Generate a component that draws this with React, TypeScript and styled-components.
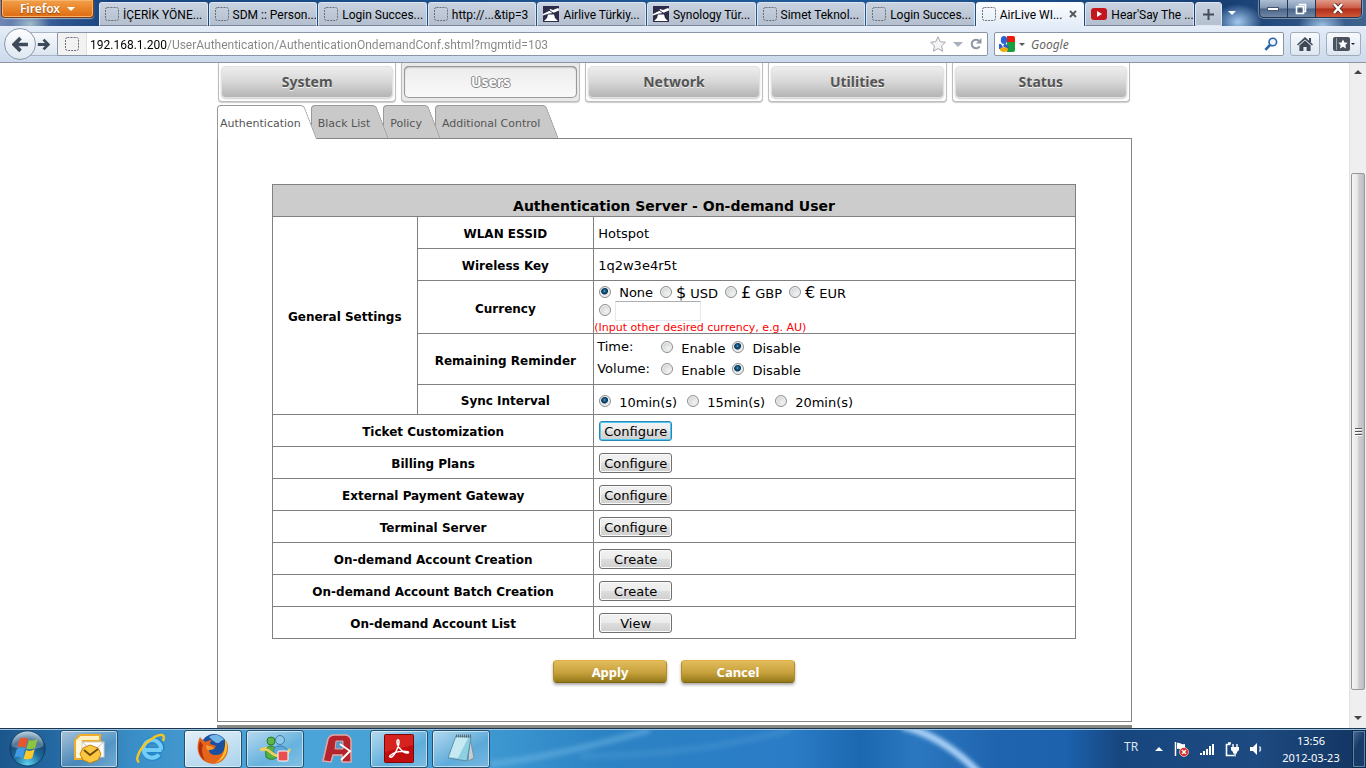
import React from 'react';
import styled, { createGlobalStyle, css } from 'styled-components';

const UI = `"Noto Sans", "Open Sans", sans-serif`;
const CHROME = `Roboto, "Open Sans", sans-serif`;
const PAGE = `"DejaVu Sans", Verdana, sans-serif`;

const GlobalStyle = createGlobalStyle`
  *, *::before, *::after { box-sizing: border-box; }
  body { margin: 0; font-family: ${UI}; font-size: 12px; color: #000; background: #fff; }
  button, input { font: inherit; color: inherit; margin: 0; }
  button { padding: 0; cursor: pointer; }
  svg { display: block; flex: none; }
`;

const Desktop = styled.div`
  display: flex;
  flex-direction: column;
  height: 100vh;
  overflow: hidden;
`;

/* ---------- window title bar and tabs ---------- */

const TitleBar = styled.header`
  display: flex;
  align-items: flex-start;
  height: 26px;
  padding-left: 1px;
  padding-right: 4px;
  background:
    radial-gradient(ellipse 20px 12px at 30px 24px, rgba(190, 214, 214, 0.75), transparent),
    radial-gradient(ellipse 24px 18px at calc(100% - 128px) 22px, rgba(170, 208, 244, 0.95), transparent),
    radial-gradient(ellipse 24px 16px at calc(100% - 44px) 26px, rgba(170, 204, 236, 0.9), transparent),
    linear-gradient(90deg, #6f87b4 0, #2f5590 60px, #17457f 110px, #1f5a98 60%, #173f74 90%, #40638f 100%);
`;

const AppButton = styled.button`
  display: flex;
  justify-content: center;
  align-items: center;
  gap: 7px;
  width: 93px;
  height: 18px;
  margin-right: 5px;
  border: 1px solid #7a3a17;
  border-top: 0;
  border-radius: 0 0 4px 4px;
  background: linear-gradient(#f2a04c, #e8852a 50%, #de6a12);
  box-shadow: inset 0 0 0 1px #f6b56b, 0 1px 1px rgba(255, 255, 255, 0.5);
  color: #fff;
  font-weight: 600;
  text-shadow: 0 1px 1px #8a4412;
`;

const Caret = styled.span<{ $color: string; $size?: number }>`
  border: ${(p) => p.$size ?? 4}px solid transparent;
  border-top-color: ${(p) => p.$color};
  border-bottom: 0;
`;

const Tabs = styled.nav`
  display: flex;
  flex: 1;
  min-width: 0;
  gap: 1px;
  padding-top: 2px;
  font-family: ${CHROME};
`;

const BrowserTab = styled.a<{ $active?: boolean }>`
  display: flex;
  flex: 1;
  min-width: 0;
  align-items: center;
  gap: 4px;
  height: 24px;
  padding: 0 2px 0 5px;
  border: 1px solid ${(p) => (p.$active ? '#f6faff' : '#dde5ef')};
  border-bottom-color: ${(p) => (p.$active ? '#e4edf8' : '#7a8698')};
  border-radius: 3px 3px 0 0;
  background: ${(p) => (p.$active ? 'linear-gradient(#fbfdff, #e4edf8)' : 'linear-gradient(#c8d2e0, #b4bfcf)')};
  color: #000;
  text-decoration: none;
  white-space: nowrap;
  overflow: hidden;
`;

const TabLabel = styled.span`
  flex: 1;
  min-width: 0;
  padding-top: 2px;
`;

const TabClose = styled.button`
  width: 12px;
  border: 0;
  background: none;
  color: #444;
`;

const NewTab = styled.button`
  display: grid;
  place-items: center;
  width: 27px;
  height: 24px;
  margin: 2px 0 0 1px;
  border: 1px solid #dde5ef;
  border-radius: 3px 3px 0 0;
  background: linear-gradient(#c8d2e0, #b4bfcf);
`;

const ListTabs = styled.button`
  display: grid;
  place-items: center;
  width: 20px;
  height: 26px;
  margin-right: 17px;
  border: 0;
  background: none;
`;

const WindowButtons = styled.div`
  display: flex;
  width: 103px;
  height: 18px;
  border: 1px solid #24364f;
  border-top: 0;
  border-radius: 0 0 5px 5px;
  box-shadow: 0 0 0 1px rgba(255, 255, 255, 0.35);
  overflow: hidden;
`;

const WindowButton = styled.button<{ $close?: boolean }>`
  display: grid;
  place-items: center;
  flex: ${(p) => (p.$close ? 47 : 28)};
  border: 0;
  border-right: ${(p) => (p.$close ? 0 : '1px solid #24364f')};
  background: ${(p) =>
    p.$close
      ? 'linear-gradient(#e09a8a, #cc5a45 48%, #b02c16 52%, #d0583a)'
      : 'linear-gradient(#aebfd4, #8298b5 48%, #4a6488 52%, #6f88a8)'};
`;

/* ---------- address bar ---------- */

const Toolbar = styled.div`
  display: flex;
  align-items: center;
  height: 37px;
  padding: 0 5px 0 4px;
  border-bottom: 1px solid #8e959e;
  background: linear-gradient(#e4edf8, #cbdaec);
  font-family: ${CHROME};
`;

const BackButton = styled.button`
  position: relative;
  z-index: 1;
  display: grid;
  place-items: center;
  width: 32px;
  height: 32px;
  border: 1px solid #8d99aa;
  border-radius: 50%;
  background: linear-gradient(#fdfeff, #dde6f0);
`;

const ForwardButton = styled.button`
  display: grid;
  place-items: center;
  width: 28px;
  height: 24px;
  margin-left: -7px;
  border: 1px solid #a9b4c2;
  border-width: 1px 0;
  background: linear-gradient(#f6f9fc, #dce5ef);
`;

const Field = styled.div<{ $grow?: boolean }>`
  display: flex;
  align-items: center;
  flex: ${(p) => (p.$grow ? '1' : '0 1 290px')};
  min-width: 0;
  height: 24px;
  margin-right: 6px;
  border: 1px solid #8a96a5;
  border-radius: ${(p) => (p.$grow ? '0 2px 2px 0' : '2px')};
  background: #fff;
`;

const SiteIdentity = styled.span`
  display: grid;
  place-items: center;
  width: 29px;
  height: 22px;
  margin-right: 3px;
  border-right: 1px solid #ddd;
  background: #f2f2f2;
`;

const AddressInput = styled.input`
  flex: 1;
  min-width: 0;
  padding: 2px 0 0;
  border: 0;
  outline: 0;
  background: linear-gradient(90deg, #000 77px, #858585 77px);
  background-clip: text;
  -webkit-background-clip: text;
  -webkit-text-fill-color: transparent;
`;

const FieldIcons = styled.span`
  display: flex;
  align-items: center;
  gap: 7px;
  padding-right: 5px;
`;

const SearchInput = styled.input`
  flex: 1;
  min-width: 0;
  padding: 0;
  border: 0;
  outline: 0;
  background: none;
  font-family: ${UI};
  &::placeholder { color: #666; font-style: italic; opacity: 1; }
`;

const ToolButton = styled.button<{ $wide?: boolean }>`
  display: flex;
  align-items: center;
  justify-content: center;
  gap: 1px;
  width: ${(p) => (p.$wide ? 35 : 30)}px;
  height: 24px;
  margin-left: ${(p) => (p.$wide ? 6 : 0)}px;
  border: 1px solid #a2adbb;
  border-radius: 3px;
  background: linear-gradient(#f8fafd, #dde6f0);
`;

/* ---------- page viewport ---------- */

const Viewport = styled.div`
  display: flex;
  flex: 1;
  min-height: 0;
  background: #fff;
`;

const Page = styled.main`
  flex: 1;
  min-width: 0;
  overflow: hidden;
  font-family: ${PAGE};
  font-size: 13px;
`;

const Content = styled.div`
  max-width: 915px;
  margin: 0 auto;
`;

const MainMenu = styled.nav`
  display: grid;
  grid-template-columns: repeat(5, 1fr);
  gap: 5px;
  padding: 0 2px 0 1px;
`;

const MenuItem = styled.a<{ $active?: boolean }>`
  height: 39px;
  padding: 3px 2px;
  border: 1px solid #bdbdbd;
  border-top: 0;
  border-radius: 0 0 4px 4px;
  background: ${(p) => (p.$active ? '#e9e9e9' : '#fff')};
  box-shadow: 0 1px 1px #ccc;
  font: 700 14px ${UI};
  text-decoration: none;
`;

const MenuFace = styled.span<{ $active?: boolean }>`
  display: grid;
  place-items: center;
  height: 32px;
  padding-bottom: 2px;
  border-radius: 5px;
  color: #555;
  text-shadow: 0 1px 0 #f4f4f4;
  background: linear-gradient(#efefef, #dadada 45%, #b2b2b2);
  box-shadow: inset 0 0 0 1px #e2e2e2, 0 1px 2px #ccc;
  ${(p) =>
    p.$active &&
    css`
      color: #fff;
      text-shadow: -1px 0 0 #888, 1px 0 0 #888, 0 -1px 0 #888, 0 1px 0 #888, 0 0 1px #888;
      background: linear-gradient(#ececec, #fafafa);
      box-shadow: inset 0 0 0 1px #999, inset 0 1px 2px #777;
    `}
`;

const SubTabs = styled.nav`
  display: flex;
  margin-top: 3px;
  font-size: 11px;
`;

const SubTab = styled.a<{ $order: number; $active?: boolean }>`
  position: relative;
  z-index: ${(p) => p.$order};
  display: flex;
  align-items: center;
  height: 34px;
  margin: 0 -6px -1px 0;
  padding: 3px ${(p) => (p.$active ? 16 : 19)}px 0 ${(p) => (p.$active ? 3 : 7)}px;
  color: #555;
  text-decoration: none;

  &::before,
  &::after {
    content: '';
    position: absolute;
    z-index: -1;
    top: 0;
    bottom: ${(p) => (p.$active ? 0 : 1)}px;
    border-top: 1px solid #999;
    background: ${(p) => (p.$active ? '#fff' : '#c9c9c9')};
  }
  &::before {
    left: 0;
    right: 16px;
    border-left: 1px solid #999;
    border-radius: 4px 0 0 0;
  }
  &::after {
    right: 13px;
    width: 20px;
    border-right: 1px solid #999;
    border-radius: 0 4px 0 0;
    transform: skewX(21deg);
    transform-origin: top;
  }
`;

const Panel = styled.section`
  padding: 45px 55px 38px 54px;
  border: 1px solid #848484;
`;

const SettingsTable = styled.table`
  width: 100%;
  border-collapse: collapse;
  table-layout: fixed;
`;

const Col = styled.col<{ $share: number }>`
  width: ${(p) => p.$share}%;
`;

const Row = styled.tr<{ $height?: number }>`
  height: ${(p) => p.$height ?? 32}px;
`;

const TitleCell = styled.th`
  padding: 10px 0 0;
  border: 1px solid #808080;
  background: #ccc;
  font-size: 14px;
`;

const HeadCell = styled.th`
  padding: 3px 0 0;
  border: 1px solid #808080;
  font-size: 12px;
  font-weight: bold;
`;

const DataCell = styled.td<{ $inset?: number; $top?: number }>`
  padding: ${(p) => p.$top ?? 1}px 0 0 ${(p) => p.$inset ?? 4}px;
  border: 1px solid #808080;
`;

const Line = styled.div<{ $height?: number; $indent?: number }>`
  display: flex;
  align-items: center;
  height: ${(p) => p.$height ?? 18}px;
  padding-left: ${(p) => p.$indent ?? 0}px;
`;

const Option = styled.label<{ $gap?: number; $end?: number }>`
  display: flex;
  align-items: center;
  gap: ${(p) => p.$gap ?? 8}px;
  margin-right: ${(p) => p.$end ?? 7}px;
  line-height: 18px;
`;

const Radio = styled.input.attrs({ type: 'radio' })`
  appearance: none;
  flex: none;
  width: 12px;
  height: 12px;
  margin: 0 0 3px;
  border: 1px solid #8e8f8f;
  border-radius: 50%;
  background: radial-gradient(circle at 65% 65%, #f2f2f2, #c4c8cc);
  box-shadow: inset 0 0 0 1px #f4f4f4;
  &:checked {
    background: radial-gradient(circle at 45% 40%, #59c4ec 0, #1a6a9a 1px, #0b2f4c 3px, #e4e8ea 4px);
  }
`;

const Sign = styled.span`
  margin-right: 4px;
  font-size: 16px;
`;

const OtherCurrency = styled.input`
  width: 86px;
  height: 20px;
  margin-left: 4px;
  border: 1px solid #e3e9ef;
  border-top-color: #abadb3;
  border-radius: 1px;
  background: #fff;
`;

const Hint = styled.p`
  height: 13px;
  margin: 0;
  color: #f00;
  font-size: 11px;
  line-height: 15px;
`;

const ReminderName = styled.span`
  width: 64px;
  margin-bottom: 4px;
`;

const FormButton = styled.button<{ $focused?: boolean }>`
  display: block;
  width: 73px;
  height: 20px;
  margin-left: 1px;
  padding-top: 1px;
  border: 1px solid ${(p) => (p.$focused ? '#2a86b4' : '#707070')};
  border-radius: 3px;
  background: linear-gradient(#f2f2f2, #ebebeb 48%, #dddddd 52%, #cfcfcf);
  box-shadow: inset 0 0 0 1px ${(p) => (p.$focused ? '#4ecbf0' : '#fafafa')};
  line-height: 18px;
`;

const Actions = styled.div`
  display: flex;
  justify-content: center;
  gap: 14px;
  margin-top: 21px;
`;

const ActionButton = styled.button`
  width: 114px;
  height: 23px;
  padding-top: 1px;
  border: 1px solid #b0901e;
  border-top-color: #e0b040;
  border-bottom-color: #7c6410;
  border-radius: 4px;
  background: linear-gradient(#e2bc5c, #c7a13c 55%, #947a1a);
  box-shadow: 0 2px 3px #aaa;
  color: #fff;
  font: 700 13px ${UI};
  line-height: 20px;
`;

const FooterRule = styled.hr`
  height: 20px;
  margin: 3px 0 0;
  border: 0;
  background: #888884;
`;

const ScrollBar = styled.div`
  display: flex;
  flex-direction: column;
  align-items: center;
  width: 17px;
  padding: 7px 0 8px;
  background: #efefef;
  border-left: 1px solid #e2e2e2;
`;

const ScrollArrow = styled.span<{ $up?: boolean }>`
  border: 4px solid transparent;
  ${(p) =>
    p.$up
      ? css`border-top: 0; border-bottom-color: #444;`
      : css`border-bottom: 0; border-top-color: #444;`}
`;

const ScrollTrack = styled.div`
  display: flex;
  flex-direction: column;
  flex: 1;
  width: 14px;
  padding: 99px 0 26px;
`;

const ScrollThumb = styled.div`
  display: flex;
  flex: 1;
  flex-direction: column;
  align-items: center;
  justify-content: center;
  gap: 1px;
  border: 1px solid #979797;
  border-radius: 2px;
  background: linear-gradient(90deg, #f5f5f5, #e6e6e8 45%, #cfcfd3 55%, #bdbdc4);
`;

const Grip = styled.span`
  width: 7px;
  height: 2px;
  border-top: 1px solid #555;
  background: #fff;
`;

/* ---------- task bar ---------- */

const TaskBar = styled.footer`
  position: relative;
  display: flex;
  align-items: center;
  height: 40px;
  border-top: 1px solid #1c3550;
  box-shadow: inset 0 1px 0 #9cc4e0;
  background: linear-gradient(
    90deg,
    #1b568c 0, #2469a3 4%, #3b8fc8 10%, #4da6d8 20%, #419dd4 34%, #2c83c4 44%, #2a7cc6 58%,
    #1c68b0 63%, #2b78c0 67%, #1f64ae 73%, #1c62ae 78%, #17467f 82%, #1d4a80 92%, #123460 100%
  );
`;

const Streaks = styled.svg`
  position: absolute;
  left: 490px;
  top: 1px;
  pointer-events: none;
`;

const StartButton = styled.button`
  display: grid;
  place-items: center;
  width: 54px;
  height: 38px;
  margin-right: 6px;
  border: 0;
  background: none;
`;

const Launchers = styled.div`
  display: flex;
  flex: 1;
  gap: 4px;
`;

const Launcher = styled.button<{ $frame?: 'open' | 'active' }>`
  display: grid;
  place-items: center;
  width: 58px;
  height: 38px;
  border: 1px solid transparent;
  border-radius: 3px;
  background: none;
  ${(p) =>
    p.$frame &&
    css`
      border-color: #24506f;
      box-shadow: inset 0 0 0 1px rgba(255, 255, 255, 0.55);
      background: ${p.$frame === 'active'
        ? 'linear-gradient(160deg, rgba(255,255,255,.85), rgba(220,236,248,.65))'
        : 'linear-gradient(150deg, rgba(255,255,255,.6), rgba(255,255,255,.15) 60%, rgba(255,255,255,.3))'};
    `}
`;

const Tray = styled.div`
  display: flex;
  align-items: center;
  color: #fff;
`;

const Language = styled.span`
  width: 31px;
  margin-bottom: 4px;
  color: #dce6f2;
`;

const TrayIcons = styled.div`
  display: flex;
  align-items: center;
  gap: 10px;
  width: 126px;
`;

const Clock = styled.time`
  width: 60px;
  margin-right: 11px;
  font-size: 11px;
  line-height: 17px;
  text-align: center;
`;

const ShowDesktop = styled.button`
  width: 14px;
  height: 38px;
  border: 1px solid #0d2848;
  box-shadow: inset 0 0 0 1px #5f82aa;
  background: linear-gradient(120deg, #4a6c94, #183c68 40%);
`;

/* ---------- icons ---------- */

const BlankIcon = () => (
  <svg width="14" height="14" viewBox="0 0 14 14">
    <rect x=".5" y=".5" width="13" height="13" rx="2" fill="none" stroke="#6b6f76" strokeDasharray="2 1" />
  </svg>
);

const LighthouseIcon = () => (
  <svg width="16" height="16" viewBox="0 0 16 16">
    <rect width="16" height="16" fill="#2c2c4a" />
    <path d="M0 8l6-3 1-2 3 1 5-2 1 1v1.500L10 7 6 7.500 0 9.500z" fill="#fff" />
    <path d="M5 8.500h6l1 3.500 3 3H1l3-3z" fill="#fff" />
    <path d="M5 3.500l6 4" stroke="#2c2c4a" />
  </svg>
);

const PlayIcon = () => (
  <svg width="16" height="12" viewBox="0 0 16 12">
    <rect width="16" height="12" rx="3" fill="#c4161c" />
    <path d="M6 3l5 3-5 3z" fill="#fff" />
  </svg>
);

const ArrowIcon = ({ size, flip }: { size: number; flip?: boolean }) => (
  <svg width={size} height={size} viewBox="0 0 16 16">
    <path
      d={flip ? 'M1 8h12M8 2l6 6-6 6' : 'M15 8H3M8 2L2 8l6 6'}
      fill="none"
      stroke="#3d4a5a"
      strokeWidth="3.4"
    />
  </svg>
);

const StarIcon = () => (
  <svg width="16" height="16" viewBox="0 0 16 16">
    <path d="M8 .8l2.2 4.9 5.2.6-3.9 3.6 1.1 5.3L8 12.6l-4.6 2.6 1.1-5.3L.6 6.3l5.2-.6z" fill="#f4f4f4" stroke="#a3a8ae" />
  </svg>
);

const ReloadIcon = () => (
  <svg width="12" height="12" viewBox="0 0 12 12">
    <path d="M9.6 8.4A4.3 4.3 0 1 1 9 2.8" fill="none" stroke="#8d98a5" strokeWidth="2" />
    <path d="M11.5 0v5.5H6z" fill="#8d98a5" />
  </svg>
);

const GoogleIcon = () => (
  <svg width="16" height="16" viewBox="0 0 16 16">
    <path d="M8 0h6a2 2 0 0 1 2 2v5H8z" fill="#ea1c0c" />
    <path d="M8 6h8v8a2 2 0 0 1-2 2H8z" fill="#1b9e3e" />
    <path d="M0 8h2l2 3-1 2H0z" fill="#2a62d2" />
    <path d="M8 0v16H6V0z" fill="#fff" />
    <ellipse cx="5" cy="4" rx="3.200" ry="4" fill="#2a62d2" />
    <path d="M6 7l4 4-1 3-5-4z" fill="#2a62d2" />
    <ellipse cx="5" cy="13.600" rx="4" ry="2.400" fill="#f4a80c" />
  </svg>
);

const SearchIcon = () => (
  <svg width="14" height="14" viewBox="0 0 14 14">
    <circle cx="8.8" cy="5" r="3.8" fill="#eef5ff" stroke="#2c64a8" strokeWidth="1.6" />
    <path d="M6 8l-4.6 4.8" stroke="#2c64a8" strokeWidth="2.6" />
  </svg>
);

const HomeIcon = () => (
  <svg width="16" height="14" viewBox="0 0 16 14">
    <path d="M8 0l8 7.4-1 1.2L8 2.4 1 8.6 0 7.4z" fill="#3f4956" />
    <path d="M2.4 8.6L8 3.6l5.6 5V14H9.6v-4H6.4v4h-4z" fill="#3f4956" />
    <rect x="12" y="1" width="2" height="4" fill="#3f4956" />
  </svg>
);

const BookmarksIcon = () => (
  <svg width="17" height="14" viewBox="0 0 17 14">
    <rect width="17" height="14" rx="2" fill="#4a525e" />
    <path d="M3.5 1v12" stroke="#97a0ac" />
    <path d="M10 2.4l1.5 3 3.3.4-2.4 2.3.6 3.3-3-1.6-3 1.6.6-3.3-2.4-2.3 3.3-.4z" fill="#fff" />
  </svg>
);

const StartOrb = () => (
  <svg width="37" height="37" viewBox="0 0 38 38">
    <defs>
      <radialGradient id="orb" cx=".5" cy=".95" r=".9">
        <stop offset="0" stopColor="#5fd2f0" />
        <stop offset=".45" stopColor="#1c6a9c" />
        <stop offset=".75" stopColor="#1a4a74" />
        <stop offset="1" stopColor="#8fb4cc" />
      </radialGradient>
    </defs>
    <circle cx="19" cy="19" r="18" fill="url(#orb)" stroke="#143c5e" />
    <path d="M3 17a16 16 0 0 1 32 0c-9 4-23 4-32 0z" fill="#fff" opacity=".25" />
    <path d="M11 9c3-2 6-1 8.500 0l-2.500 9c-3-1-5-2-8.500 0z" fill="#e8562a" />
    <path d="M20.500 10c3 1.500 6 1 9-1l-2.500 9c-3 2-6 2-9 1z" fill="#8cc63e" />
    <path d="M8 19.500c3-2 6-1 8.500 0l-2.500 9c-3-1-5-2-8.500 0z" fill="#3f9ce4" />
    <path d="M17.500 20.500c3 1.500 6 1 9-1l-2.500 9c-3 2-6 2-9 1z" fill="#fcc92c" />
  </svg>
);

const OutlookIcon = () => (
  <svg width="32" height="32" viewBox="0 0 32 32">
    <path d="M2 7l5-5h20v9" fill="#fff3c4" stroke="#f0ac28" strokeWidth="2" />
    <path d="M2 7v19h8V8h16" fill="#fff8dc" stroke="#f0ac28" strokeWidth="2" />
    <rect x="9" y="9" width="22" height="15" fill="#fff" stroke="#d0cdc4" />
    <path d="M9 9l11 9L31 9" fill="none" stroke="#c8c4b8" />
    <path d="M17 12l8 3 3 6-3 6-8 3-7-3-3-6 3-6z" fill="#fbc740" stroke="#c9820e" />
    <path d="M11 17l6 5 8-6" fill="none" stroke="#6e4b0c" strokeWidth="1.800" />
  </svg>
);

const ExplorerIcon = () => (
  <svg width="32" height="32" viewBox="0 0 32 32">
    <path d="M27 17.500H9M24.500 21.500A8.800 8.800 0 1 1 26.500 17" fill="none" stroke="#2387cc" strokeWidth="6.500" />
    <path d="M26.500 17H9M24 21.500A8.800 8.800 0 1 1 26 16.500" fill="none" stroke="#74cdf6" strokeWidth="4" />
    <path d="M4 29.500C-1 26 6 12 18 5c8-5 13-4 10 3" fill="none" stroke="#f6c61e" strokeWidth="2.400" />
  </svg>
);

const FirefoxIcon = () => (
  <svg width="32" height="32" viewBox="0 0 32 32">
    <circle cx="17" cy="14" r="13" fill="#1c4f9e" />
    <path d="M12 4c5-4 12-2 15 3-4 0-3 3-6 3s-4-2-9-6z" fill="#72b6e8" />
    <path d="M3 4C-2 14 1 25 9 29c10 5 22-1 22-14 0-4-1-6-3-8 1 9-2 15-9 15-4 0-7-2-7-5l5-1 2-3-6-2c0-2 1-3 2-4-3 0-5 1-6 2C6 7 4 6 3 4z" fill="#e4641a" />
    <path d="M28 6c5 9 1 21-10 24 7-4 11-12 10-24z" fill="#fbc02c" />
    <path d="M3 8c-3 8-1 15 5 20-3-7-4-11-2-16z" fill="#b32c10" />
    <path d="M9 12l6 2 2 2-5 1c-2 1-3-2-3-5z" fill="#fb9a30" />
  </svg>
);

const MessengerIcon = () => (
  <svg width="32" height="32" viewBox="0 0 32 32">
    <path d="M2 17c6-3 11-1 14 2" fill="none" stroke="#f0cf5a" strokeWidth="3" />
    <circle cx="12" cy="8" r="4" fill="#5cb848" stroke="#2f7a2a" />
    <path d="M7 24c-1-8 1-11 5-11s6 3 6 11c-3 3-8 3-11 0z" fill="#52b044" stroke="#2f7a2a" />
    <circle cx="21" cy="7" r="4.500" fill="#8cc8ea" stroke="#3c7eae" />
    <path d="M15 21c-1-6 1-8 6-8s8 3 7 8c-3 3-10 3-13 0z" fill="#5ca8da" stroke="#3c7eae" />
    <path d="M1 17c11-3 10 6 19 6 5 0 9-3 11-7" fill="none" stroke="#f0cf5a" strokeWidth="2.600" />
    <rect x="19" y="18" width="10" height="10" rx="1" fill="#e85050" stroke="#fff" />
  </svg>
);

const AccessIcon = () => (
  <svg width="34" height="32" viewBox="0 0 34 32">
    <path d="M3 28L8 6q2-4 6-4h12q4 1 5 5v22h-9v-7h-9l-2 7z" fill="#b3242c" stroke="#e4a6a6" strokeWidth="1.500" />
    <path d="M16 8h7v8h-8z" fill="#5c99c0" stroke="#e4a6a6" />
    <path d="M20 11l10 7-9 9" fill="none" stroke="#fff" strokeWidth="1.800" />
  </svg>
);

const ReaderIcon = () => (
  <svg width="30" height="30" viewBox="0 0 30 30">
    <rect x=".5" y=".5" width="29" height="28" rx="1" fill="#c20d0f" stroke="#7e0608" />
    <path d="M1 1h28v10L1 18z" fill="#e2322c" opacity=".6" />
    <path d="M6 23c3 2 9-10 9-15 0-3-2-3-2 0 0 5 7 12 11 11 4-2-12-3-17 2-1 1-2 1-1 2z" fill="none" stroke="#fff" strokeWidth="1.500" />
  </svg>
);

const NotepadIcon = () => (
  <svg width="32" height="32" viewBox="0 0 32 32">
    <path d="M25 5l4 20-6 3z" fill="#c4d0d8" stroke="#7e929e" />
    <path d="M11 3l15 1-4 24-19-3z" fill="#8ed0e2" stroke="#5a8ea4" />
    <path d="M11 4l12 1-10 20-9-1z" fill="#dff5fa" opacity=".7" />
    <path d="M11 3h16" stroke="#5f6b72" strokeWidth="3" strokeDasharray="1 1" />
  </svg>
);

const FlagIcon = () => (
  <svg width="16" height="16" viewBox="0 0 16 16">
    <path d="M2.500 1v14" stroke="#fff" strokeWidth="1.500" />
    <path d="M4 2c3-1 4 2 8 1v6c-4 1-5-2-8-1z" fill="#fff" />
    <circle cx="11" cy="11" r="4.500" fill="#d8281e" stroke="#fff" strokeWidth=".6" />
    <path d="M9 9l4 4M13 9l-4 4" stroke="#fff" strokeWidth="1.500" />
  </svg>
);

const SignalIcon = () => (
  <svg width="16" height="14" viewBox="0 0 16 14">
    <path d="M1 13v-2h2v2zM4 13V9h2v4zM7 13V7h2v6zM10 13V4h2v9zM13 13V2h2v11z" fill="#fff" />
  </svg>
);

const PowerIcon = () => (
  <svg width="15" height="16" viewBox="0 0 15 16">
    <path d="M9 14.500H1.500v-11h4M3 2h3" fill="none" stroke="#fff" strokeWidth="1.600" />
    <path d="M6 6h8v3l-2 2v1.500H8V11L6 9z" fill="#fff" />
    <path d="M8 3v3M12 3v3M10 12v3.500" stroke="#fff" strokeWidth="1.400" />
  </svg>
);

const SpeakerIcon = () => (
  <svg width="14" height="14" viewBox="0 0 14 14">
    <path d="M0 5h3l4-4v12L3 9H0z" fill="#fff" />
    <path d="M9.500 4.500q2 2.500 0 5" fill="none" stroke="#d4e0ec" strokeWidth="1.400" />
  </svg>
);

/* ---------- content ---------- */

type IconKind = 'blank' | 'lighthouse' | 'play';

const TAB_ICONS: Record<IconKind, React.ReactElement> = {
  blank: <BlankIcon />,
  lighthouse: <LighthouseIcon />,
  play: <PlayIcon />,
};

const BROWSER_TABS: { label: string; icon: IconKind; active?: boolean }[] = [
  { label: 'İÇERİK YÖNE...', icon: 'blank' },
  { label: 'SDM :: Person...', icon: 'blank' },
  { label: 'Login Succes...', icon: 'blank' },
  { label: 'http://...&tip=3', icon: 'blank' },
  { label: 'Airlive Türkiy...', icon: 'lighthouse' },
  { label: 'Synology Tür...', icon: 'lighthouse' },
  { label: 'Simet Teknol...', icon: 'blank' },
  { label: 'Login Succes...', icon: 'blank' },
  { label: 'AirLive WI...', icon: 'blank', active: true },
  { label: "Hear'Say The ...", icon: 'play' },
];

const MENU = ['System', 'Users', 'Network', 'Utilities', 'Status'];
const SUB_TABS = ['Authentication', 'Black List', 'Policy', 'Additional Control'];

const ACTION_ROWS = [
  { label: 'Ticket Customization', action: 'Configure', focused: true },
  { label: 'Billing Plans', action: 'Configure' },
  { label: 'External Payment Gateway', action: 'Configure' },
  { label: 'Terminal Server', action: 'Configure' },
  { label: 'On-demand Account Creation', action: 'Create' },
  { label: 'On-demand Account Batch Creation', action: 'Create' },
  { label: 'On-demand Account List', action: 'View' },
];

const CURRENCIES = [
  { sign: '$', code: 'USD' },
  { sign: '£', code: 'GBP' },
  { sign: '€', code: 'EUR' },
];

const Reminder = ({ name }: { name: string }) => (
  <Line $height={22}>
    <ReminderName>{name}:</ReminderName>
    <Option>
      <Radio name={name} />
      Enable
    </Option>
    <Option>
      <Radio name={name} defaultChecked />
      Disable
    </Option>
  </Line>
);

const BrowserChrome = () => (
  <>
    <TitleBar>
      <AppButton>
        Firefox <Caret $color="#fff" />
      </AppButton>
      <Tabs aria-label="Open tabs">
        {BROWSER_TABS.map((tab, i) => (
          <BrowserTab key={i} href="#" $active={tab.active}>
            {TAB_ICONS[tab.icon]}
            <TabLabel>{tab.label}</TabLabel>
            {tab.active && (
              <TabClose aria-label="Close tab">
                <svg width="8" height="8" viewBox="0 0 8 8">
                  <path d="M1 1l6 6M7 1L1 7" stroke="#555" strokeWidth="1.800" />
                </svg>
              </TabClose>
            )}
          </BrowserTab>
        ))}
      </Tabs>
      <NewTab aria-label="New tab">
        <svg width="11" height="11" viewBox="0 0 11 11">
          <path d="M5.500 0v11M0 5.500h11" stroke="#444c58" strokeWidth="2" />
        </svg>
      </NewTab>
      <ListTabs aria-label="List all tabs">
        <Caret $color="#fff" />
      </ListTabs>
      <WindowButtons>
        <WindowButton aria-label="Minimize">
          <svg width="12" height="4" viewBox="0 0 12 4">
            <rect x=".5" y=".5" width="11" height="3" fill="#fff" stroke="#46556a" />
          </svg>
        </WindowButton>
        <WindowButton aria-label="Restore">
          <svg width="12" height="12" viewBox="0 0 12 12">
            <path d="M3.500 1.500h7v7h-2M1.500 3.500h7v7h-7z" fill="none" stroke="#fff" strokeWidth="1.600" />
            <rect x="3.500" y="5.500" width="3" height="3" fill="#46556a" />
          </svg>
        </WindowButton>
        <WindowButton $close aria-label="Close">
          <svg width="12" height="11" viewBox="0 0 12 11">
            <path d="M2 1l8 9M10 1L2 10" stroke="#5a2a22" strokeWidth="4.200" />
            <path d="M2 1l8 9M10 1L2 10" stroke="#fff" strokeWidth="2.600" />
          </svg>
        </WindowButton>
      </WindowButtons>
    </TitleBar>
    <Toolbar>
      <BackButton aria-label="Back">
        <ArrowIcon size={17} />
      </BackButton>
      <ForwardButton aria-label="Forward">
        <ArrowIcon size={13} flip />
      </ForwardButton>
      <Field $grow>
        <SiteIdentity>
          <BlankIcon />
        </SiteIdentity>
        <AddressInput
          aria-label="Address"
          defaultValue="192.168.1.200/UserAuthentication/AuthenticationOndemandConf.shtml?mgmtid=103"
        />
        <FieldIcons>
          <StarIcon />
          <Caret $color="#a8b0ba" $size={5} />
          <ReloadIcon />
        </FieldIcons>
      </Field>
      <Field>
        <EngineButton aria-label="Search engine">
          <GoogleIcon />
          <Caret $color="#555" $size={3} />
        </EngineButton>
        <SearchInput aria-label="Search" placeholder="Google" />
        <FieldIcons>
          <SearchIcon />
        </FieldIcons>
      </Field>
      <ToolButton aria-label="Home">
        <HomeIcon />
      </ToolButton>
      <ToolButton $wide aria-label="Bookmarks">
        <BookmarksIcon />
        <Caret $color="#222" $size={2} />
      </ToolButton>
    </Toolbar>
  </>
);

const EngineButton = styled.button`
  display: flex;
  align-items: center;
  gap: 4px;
  padding: 0 6px 0 4px;
  border: 0;
  background: none;
`;

const Settings = () => (
  <SettingsTable>
    <colgroup>
      <Col $share={18} />
      <Col $share={22} />
      <Col $share={60} />
    </colgroup>
    <tbody>
      <Row>
        <TitleCell colSpan={3}>Authentication Server - On-demand User</TitleCell>
      </Row>
      <Row>
        <HeadCell rowSpan={5}>General Settings</HeadCell>
        <HeadCell>WLAN ESSID</HeadCell>
        <DataCell>Hotspot</DataCell>
      </Row>
      <Row>
        <HeadCell>Wireless Key</HeadCell>
        <DataCell>1q2w3e4r5t</DataCell>
      </Row>
      <Row $height={53}>
        <HeadCell>Currency</HeadCell>
        <DataCell $inset={0} $top={3}>
          <Line $indent={5}>
            <Option>
              <Radio name="currency" defaultChecked />
              None
            </Option>
            {CURRENCIES.map((c) => (
              <Option key={c.code} $gap={4}>
                <Radio name="currency" />
                <span>
                  <Sign>{c.sign}</Sign>
                  {c.code}
                </span>
              </Option>
            ))}
          </Line>
          <Line $indent={5}>
            <Radio name="currency" aria-label="Other currency" />
            <OtherCurrency aria-label="Other currency code" />
          </Line>
          <Hint>(Input other desired currency, e.g. AU)</Hint>
        </DataCell>
      </Row>
      <Row $height={51}>
        <HeadCell>Remaining Reminder</HeadCell>
        <DataCell $inset={3}>
          <Reminder name="Time" />
          <Reminder name="Volume" />
        </DataCell>
      </Row>
      <Row $height={30}>
        <HeadCell>Sync Interval</HeadCell>
        <DataCell $inset={5} $top={6}>
          <Line>
            {['10min(s)', '15min(s)', '20min(s)'].map((label, i) => (
              <Option key={label} $end={10}>
                <Radio name="sync" defaultChecked={i === 0} />
                {label}
              </Option>
            ))}
          </Line>
        </DataCell>
      </Row>
      {ACTION_ROWS.map((row) => (
        <Row key={row.label}>
          <HeadCell colSpan={2}>{row.label}</HeadCell>
          <DataCell>
            <FormButton $focused={row.focused}>{row.action}</FormButton>
          </DataCell>
        </Row>
      ))}
    </tbody>
  </SettingsTable>
);

export default function App() {
  return (
    <>
      <GlobalStyle />
      <Desktop>
        <BrowserChrome />
        <Viewport>
          <Page>
            <Content>
              <MainMenu>
                {MENU.map((item) => (
                  <MenuItem key={item} href="#" $active={item === 'Users'}>
                    <MenuFace $active={item === 'Users'}>{item}</MenuFace>
                  </MenuItem>
                ))}
              </MainMenu>
              <SubTabs>
                {SUB_TABS.map((tab, i) => (
                  <SubTab key={tab} href="#" $active={i === 0} $order={SUB_TABS.length - i}>
                    {tab}
                  </SubTab>
                ))}
              </SubTabs>
              <Panel>
                <Settings />
                <Actions>
                  <ActionButton>Apply</ActionButton>
                  <ActionButton>Cancel</ActionButton>
                </Actions>
              </Panel>
              <FooterRule />
            </Content>
          </Page>
          <ScrollBar>
            <ScrollArrow $up />
            <ScrollTrack>
              <ScrollThumb>
                <Grip />
                <Grip />
                <Grip />
              </ScrollThumb>
            </ScrollTrack>
            <ScrollArrow />
          </ScrollBar>
        </Viewport>
        <TaskBar>
          <Streaks width="510" height="39" viewBox="0 0 510 39">
            <defs>
              <filter id="soft" x="-20%" y="-20%" width="140%" height="140%">
                <feGaussianBlur stdDeviation="2" />
              </filter>
            </defs>
            <path d="M412-4q42 10 80 50" fill="none" stroke="#a9d0f6" strokeWidth="7" filter="url(#soft)" />
            <path d="M0 34q60-6 160-34" fill="none" stroke="#7cc0e8" strokeWidth="7" opacity=".4" filter="url(#soft)" />
            <path d="M90 26q110 0 210-26" fill="none" stroke="#6cb0e0" strokeWidth="7" opacity=".2" filter="url(#soft)" />
          </Streaks>
          <StartButton aria-label="Start">
            <StartOrb />
          </StartButton>
          <Launchers>
            <Launcher $frame="open" aria-label="Outlook"><OutlookIcon /></Launcher>
            <Launcher aria-label="Internet Explorer"><ExplorerIcon /></Launcher>
            <Launcher $frame="active" aria-label="Firefox"><FirefoxIcon /></Launcher>
            <Launcher $frame="open" aria-label="Messenger"><MessengerIcon /></Launcher>
            <Launcher aria-label="Access"><AccessIcon /></Launcher>
            <Launcher $frame="open" aria-label="Adobe Reader"><ReaderIcon /></Launcher>
            <Launcher $frame="open" aria-label="Notepad"><NotepadIcon /></Launcher>
          </Launchers>
          <Tray>
            <Language>TR</Language>
            <TrayIcons>
              <svg width="8" height="4" viewBox="0 0 8 4">
                <path d="M4 0l4 4H0z" fill="#fff" />
              </svg>
              <FlagIcon />
              <SignalIcon />
              <PowerIcon />
              <SpeakerIcon />
            </TrayIcons>
            <Clock>
              13:56
              <br />
              2012-03-23
            </Clock>
            <ShowDesktop aria-label="Show desktop" />
          </Tray>
        </TaskBar>
      </Desktop>
    </>
  );
}
